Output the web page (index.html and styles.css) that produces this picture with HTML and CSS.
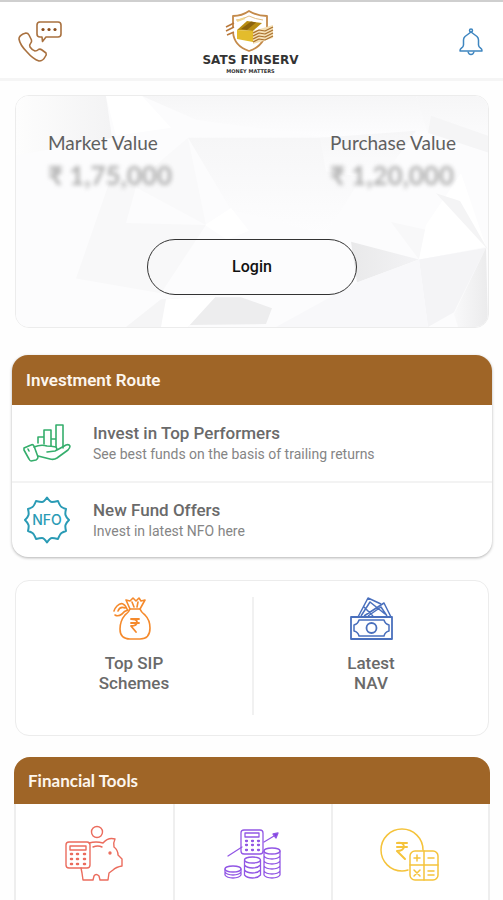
FILE: index.html
```html
<!DOCTYPE html>
<html lang="en">
<head>
    <meta charset="UTF-8">
    <meta name="viewport" content="width=device-width, initial-scale=1">
    <title>Sats Finserv</title>
    <link rel="stylesheet" href="styles.css">
</head>
<body>
    <header class="topbar">
        <button class="icon-btn" aria-label="Contact us">
            <svg width="44" height="42" viewBox="0 0 44 42" fill="none" stroke="#a9713f" stroke-width="1.6" stroke-linejoin="round" stroke-linecap="round">
                <path d="M21 1H40Q43 1 43 4V13Q43 16 40 16H28L24.500 20.500L24 16H22Q19 16 19 13V4Q19 1 22 1Z"/>
                <path d="M5 13L8 12Q10 12 11 14L13.500 19Q14 21 12.500 22.500Q11 24 12 26Q14 29 17 30Q19 30 20.500 28.500Q22 27.500 24 29L28 32Q29 34 27 36Q25 40 21 40Q15 38 9 31Q2 24 1 18Q1 15 5 13Z"/>
                <g fill="#8b4d1b" stroke="none"><circle cx="25" cy="8.500" r="1.600"/><circle cx="31" cy="8.500" r="1.600"/><circle cx="37" cy="8.500" r="1.600"/></g>
            </svg>
        </button>
        <a class="brand" href="#">
            <svg width="50" height="42" viewBox="0 0 50 42" fill="none" stroke-linejoin="round" aria-hidden="true">
                <path d="M8 18V6Q17 6 24 1Q32 6 42 6V18" stroke="#c48a4a" stroke-width="1.800"/>
                <path d="M8 22Q9 36 24 41Q34 38 39 29" stroke="#c48a4a" stroke-width="1.800"/>
                <path d="M11 10Q17 10 24 6Q30 9 38 10" stroke="#e2bd83" stroke-width="1"/>
                <path d="M1 17L9 13M1 21L9 17M2 25L9 22" stroke="#b9783a" stroke-width="1.500"/>
                <path d="M12 20L22 11L37 13L28 21Z" fill="#b98d12"/>
                <path d="M12 20L28 21V32L12 29Z" fill="#e3bc2c"/>
                <path d="M16 19L26 11.500L31 12.500L22 20Z" fill="#8c640d"/>
                <path d="M28 21L48 15V28L28 34Z" fill="#f4dfb5"/>
                <path d="M28 23L34 20L40 21L48 17M28 26L34 23L40 24L48 20M28 29L34 26L40 27L48 23M28 32L34 29L40 30L48 26" stroke="#a9702d" stroke-width="1.200"/>
                <path d="M12 11L20 8" stroke="#f0d690" stroke-width="2"/>
            </svg>
            <span class="brand-name">SATS FINSERV</span>
            <span class="brand-tag">MONEY MATTERS</span>
        </a>
        <button class="icon-btn" aria-label="Notifications">
            <svg width="24" height="28" viewBox="0 0 24 28" fill="none" stroke="#3f86c0" stroke-width="1.500" stroke-linejoin="round">
                <circle cx="12" cy="2.500" r="1.500"/>
                <path d="M12 4L6 8.500Q4.500 10 4.500 12V17Q4.500 19 2 20.500Q1 21 1 23H23Q23 21 22 20.500Q19.500 19 19.500 17V12Q19.500 10 18 8.500Z"/>
                <path d="M9 23.500Q9.500 26.500 12 26.500Q14.500 26.500 15 23.500"/>
            </svg>
        </button>
    </header>

    <main>
        <section class="card portfolio">
            <!-- faceted backdrop -->
            <svg class="facets" viewBox="0 0 472 233" preserveAspectRatio="none" aria-hidden="true">
                <defs>
                    <linearGradient id="fade" x1="0" y1="0" x2="1" y2="0">
                        <stop offset="0" stop-color="#e9e9ea"/><stop offset="1" stop-color="#f3f3f5"/>
                    </linearGradient>
                    <linearGradient id="soft" x1="0" y1="0" x2="0" y2="1">
                        <stop offset="0" stop-color="#f6f6f7"/><stop offset="1" stop-color="#fdfdfe"/>
                    </linearGradient>
                    <linearGradient id="left" x1="0" y1="0" x2="1" y2="0">
                        <stop offset="0" stop-color="#fdfdfd"/><stop offset="1" stop-color="#f3f3f4"/>
                    </linearGradient>
                    <linearGradient id="side" x1="0" y1="0" x2="1" y2="0">
                        <stop offset="0" stop-color="#f9f9fa"/><stop offset="1" stop-color="#ebebec"/>
                    </linearGradient>
                </defs>
                <path fill="#fcfcfd" d="M0 0H472V233H0Z"/>
                <path fill="url(#left)" d="M0 0H90L96 42L0 60Z"/>
                <path fill="url(#soft)" d="M126 0H400L415 40L310 42L180 24Z"/>
                <path fill="#fff" d="M90 0H126L155 32L100 40Z"/>
                <path fill="url(#soft)" d="M172 42H310L350 75L310 140L215 115Z"/>
                <path fill="#f9f9fa" d="M172 42L190 130L116 90Z"/>
                <path fill="#f8f8f9" d="M94 85L120 92L110 128L190 130L145 199L60 184Z"/>
                <path fill="url(#soft)" d="M304 42L400 35L365 85L310 76Z"/>
                <path fill="url(#soft)" d="M400 0H472V55L412 38Z"/>
                <path fill="#f5f5f6" d="M415 20L472 40V57L412 37Z"/>
                <path fill="#fff" d="M189 130L215 113L233 136L211 145Z"/>
                <path fill="#f8f8f9" d="M375 127L410 135L403 165Z"/>
                <path fill="#fff" d="M410 130L445 78L470 152L403 165Z"/>
                <path fill="#f4f4f5" d="M420 98L444 106L472 155Z"/>
                <path fill="url(#fade)" d="M335 147L403 165L341 188Z"/>
                <path fill="#f4f4f6" d="M403 165L470 153L438 218L412 233Z"/>
                <path fill="#f8f8fa" d="M341 188L403 165L412 233H260Z"/>
                <path fill="url(#side)" d="M470 153L438 220L442 233H472Z"/>
                <path fill="#f5f5f6" d="M145 205L200 202L172 233H110Z"/>
                <path fill="#ededee" d="M198 203H225L256 214L250 230L172 231Z"/>
                <path fill="#fff" d="M150 205L200 202L172 233H145Z"/>
            </svg>
            <dl class="values">
                <div>
                    <dt>Market Value</dt>
                    <dd>₹ 1,75,000</dd>
                </div>
                <div>
                    <dt>Purchase Value</dt>
                    <dd>₹ 1,20,000</dd>
                </div>
            </dl>
            <button class="login">Login</button>
        </section>

        <section class="panel routes">
            <h2 class="panel-title">Investment Route</h2>
            <a class="route" href="#">
                <svg width="48" height="38" viewBox="0 0 48 38" fill="none" stroke="#35ae6c" stroke-width="1.600" stroke-linejoin="round" stroke-linecap="round">
                    <path d="M15 19V13H21V20M21 19V6H28V22M28 15H33V23M33 23V1H40V24"/>
                    <path d="M1 24L8 21Q10 20 11 22L15 33Q15 35 13 36L8 37Q7 37 6 35L1 26Z"/>
                    <path d="M11 23Q18 20 24 22Q28 22 33 23Q35 26 32 27L24 28M34 26L43 21Q46 20 47 22Q47 24 45 26L34 34Q31 36 27 35L15 32"/>
                    <path d="M5 25L6 27"/>
                </svg>
                <span class="route-text">
                    <strong>Invest in Top Performers</strong>
                    <span>See best funds on the basis of trailing returns</span>
                </span>
            </a>
            <a class="route" href="#">
                <svg width="48" height="48" viewBox="0 0 48 48" fill="none" stroke="#2a9bb5" stroke-width="2" stroke-linejoin="round">
                    <path d="M24 1.500Q27 6 29 6Q31 6 35 5Q37 10 38.500 11Q40 12 43 13Q42 17 42.500 19Q43 21 46 24Q43 27 42.500 29Q42 31 43 35Q40 36 38.500 37Q37 38 35 43Q31 42 29 42Q27 42 24 46.500Q21 42 19 42Q17 42 13 43Q11 38 9.500 37Q8 36 5 35Q6 31 5.500 29Q5 27 2 24Q5 21 5.500 19Q6 17 5 13Q8 12 9.500 11Q11 10 13 5Q17 6 19 6Q21 6 24 1.500Z"/>
                    <text class="nfo" x="24" y="29" text-anchor="middle">NFO</text>
                </svg>
                <span class="route-text">
                    <strong>New Fund Offers</strong>
                    <span>Invest in latest NFO here</span>
                </span>
            </a>
        </section>

        <nav class="card shortcuts">
            <a href="#">
                <svg width="44" height="44" viewBox="0 0 44 44" fill="none" stroke="#f58a2c" stroke-width="1.600" stroke-linejoin="round" stroke-linecap="round">
                    <path d="M18 12L14 3L18 4L21 1L24 4L27 1L29 4L33 3L28 12M20 5L22 10M26 5L25 10"/>
                    <path d="M18 12H28Q29 15 33 18Q38 23 38 31Q38 42 28 42H18Q8 42 8 32Q8 24 13 18Q17 15 18 12Z"/>
                    <path d="M16 13Q12 14 10 17Q6 20 3 18M15 12Q11 3 5 9Q3 11 2 14M13 11Q8 9 6 14"/>
                    <path stroke-width="1.800" d="M19 22H27M19 26H27M19 22Q25 22 25 25Q25 29 19 29L24 35"/>
                </svg>
                <span>Top SIP<br>Schemes</span>
            </a>
            <a href="#">
                <svg width="44" height="44" viewBox="0 0 44 44" fill="none" stroke="#4a70bd" stroke-width="1.800" stroke-linejoin="round">
                    <path d="M2 20H43V42H2Z"/>
                    <path stroke-width="1.500" d="M10 23H35Q36 27 40 28V34Q36 35 35 39H10Q9 35 5 34V28Q9 27 10 23Z"/>
                    <circle cx="22.500" cy="31" r="5"/>
                    <path stroke-width="1.500" d="M9 20L19 1L32 7M12 19L21 5L36 17M15 19L35 6L42 20M19 19L32 10L38 19M15 10L24 19"/>
                </svg>
                <span>Latest<br>NAV</span>
            </a>
        </nav>

        <section class="panel tools">
            <h2 class="panel-title">Financial Tools</h2>
            <div class="tool-grid">
                <a href="#" aria-label="Savings calculator">
                    <svg width="60" height="60" viewBox="0 0 60 60" fill="none" stroke="#eb6c5d" stroke-width="1.400" stroke-linejoin="round" stroke-linecap="round">
                        <circle cx="32" cy="8" r="5.500"/>
                        <path d="M4 18H22Q25 18 25 21V41Q25 44 22 44H4Q1 44 1 41V21Q1 18 4 18ZM5 22H21V26H5Z"/>
                        <path stroke-width="2.500" d="M6 30H7M12 30H13M19 30H20M6 35H7M12 35H13M19 35H20M6 40H7M12 40H13M19 40H20"/>
                        <path d="M24 19Q31 17 38 19Q43 13 50 15Q48 19 49 23Q53 26 53 31L57 35V42Q51 43 48 46L44 49L43 56H35L34 52Q31 49 29 52L28 56H18L17 49L16 44M28 23Q33 21 37 23"/>
                        <circle cx="45" cy="29" r="1" fill="#eb6c5d"/>
                    </svg>
                </a>
                <a href="#" aria-label="Growth calculator">
                    <svg width="60" height="60" viewBox="0 0 60 60" fill="none" stroke="#9257e5" stroke-width="1.300" stroke-linejoin="round" stroke-linecap="round">
                        <path d="M5 32L19 23M41 18L51 12"/><path fill="#7a3fe0" d="M50 10L55 9L53 14Z"/>
                        <path d="M21 6H37Q40 6 40 9V27Q40 30 37 30H21Q18 30 18 27V9Q18 6 21 6ZM22 9H36V13H22Z"/>
                        <path stroke-width="2.300" d="M23 17H24M29 17H30M35 17H36M23 21H24M29 21H30M35 21H36M23 26H24M29 26H30M35 26H36"/>
                        <ellipse cx="10" cy="45" rx="8" ry="3"/>
                        <path d="M2 45V51Q4 54 10 54Q16 54 18 51V45M2 48Q4 51 10 51Q16 51 18 48"/>
                        <ellipse cx="29.500" cy="36" rx="8" ry="3"/>
                        <path d="M21.500 36V51Q24 54 29.500 54Q35 54 37.500 51V36M21.500 41Q24 44 29.500 44Q35 44 37.500 41M21.500 46Q24 49 29.500 49Q35 49 37.500 46"/>
                        <ellipse cx="49" cy="27" rx="8" ry="3"/>
                        <path d="M41 27V51Q43 54 49 54Q55 54 57 51V27M41 32Q43 35 49 35Q55 35 57 32M41 37Q43 40 49 40Q55 40 57 37M41 42Q43 45 49 45Q55 45 57 42M41 47Q43 50 49 50Q55 50 57 47"/>
                    </svg>
                </a>
                <a href="#" aria-label="SIP calculator">
                    <svg width="60" height="60" viewBox="0 0 60 60" fill="none" stroke="#f5c33b" stroke-width="1.500" stroke-linejoin="round" stroke-linecap="round">
                        <path d="M28 46Q25 47 22 47A21 21 0 1 1 43 26"/>
                        <path stroke-width="2" d="M17 19H27M17 23H27M17 19Q24 18 24 23Q23 27 17 27L25 35"/>
                        <rect x="30" y="27" width="28" height="29" rx="5"/>
                        <path d="M44 27V56M30 41H58"/>
                        <path d="M34 34H40M37 31V37M48 34H54M34 46L40 52M40 46L34 52M48 47H54M48 51H54"/>
                    </svg>
                </a>
            </div>
        </section>
    </main>
</body>
</html>
```
FILE: styles.css
```css
* {
    box-sizing: border-box;
}
body {
    margin: 0;
    height: 100vh;
    display: flex;
    flex-direction: column;
    overflow: hidden;
    background-color: #fefefe;
    font-family: Roboto, Arial, sans-serif;
    color: #6a6a6a;
}
a {
    color: inherit;
    text-decoration: none;
}
button {
    font: inherit;
    cursor: pointer;
}
svg {
    display: block;
    flex-shrink: 0;
}
.topbar {
    display: flex;
    justify-content: space-between;
    align-items: center;
    padding: 8px 20px 4px 18px;
    border-top: 2px solid #cfcfcf;
    border-bottom: 3px solid #f5f5f5;
    background-color: white;
}
.icon-btn {
    width: 44px;
    padding: 0;
    border: none;
    background: none;
}
.icon-btn:last-child svg {
    margin-left: auto;
}
.brand {
    display: flex;
    flex-direction: column;
    align-items: center;
    font-family: "DejaVu Sans", sans-serif;
    color: #333;
}
.brand-name {
    font-size: 12px;
    font-weight: bold;
    line-height: 16px;
}
.brand-tag {
    font-size: 5px;
    font-weight: bold;
    line-height: 6px;
}
main {
    flex: 1;
    display: flex;
    flex-direction: column;
    min-height: 0;
    padding: 14px 11px 0 12px;
}
.card {
    margin: 0 3px;
    border: 1px solid #ececec;
    border-radius: 14px;
    background-color: white;
}
.portfolio {
    position: relative;
    overflow: hidden;
    padding: 35px 32px 32px;
    font-family: Lato, sans-serif;
}
.facets {
    position: absolute;
    inset: 0;
    width: 100%;
    height: 100%;
}
.values {
    position: relative;
    display: flex;
    justify-content: space-between;
    margin: 0 0 48px;
}
.values dt {
    font-size: 19px;
    line-height: 24px;
    color: #606060;
}
.values dd {
    margin: 4px 0 0;
    font-size: 26px;
    font-weight: bold;
    line-height: 32px;
    color: #b0b0b0;
    filter: blur(2px);
}
.login {
    position: relative;
    display: block;
    width: 210px;
    margin: 0 auto;
    padding: 15px;
    border: 1px solid #333;
    border-radius: 28px;
    background-color: transparent;
    font-family: Roboto, sans-serif;
    font-size: 16px;
    font-weight: 500;
    line-height: 24px;
    color: #111;
}
.panel {
    overflow: hidden;
    border-radius: 16px;
    background-color: white;
}
.panel-title {
    margin: 0;
    padding: 0 14px;
    background-color: #9f6527;
    color: #fdf6ee;
    font-size: 17px;
    font-weight: 600;
    line-height: 50px;
}
.routes {
    flex-shrink: 0;
    margin: 27px 0 23px;
    box-shadow: 0 1px 3px rgba(0,0,0,0.3);
}
.route {
    display: flex;
    align-items: center;
    gap: 22px;
    min-height: 76px;
    padding: 0 11px;
}
.route + .route {
    border-top: 2px solid #f3f3f3;
}
.route-text {
    font-size: 14px;
    line-height: 20px;
    color: #858585;
}
.route-text strong {
    display: block;
    font-size: 17px;
    font-weight: 500;
    line-height: 22px;
    color: #6a6a6a;
}
.nfo {
    font: 500 14px Inter, sans-serif;
    fill: #2a9bb5;
    stroke: none;
}
.shortcuts {
    display: grid;
    grid-template-columns: 1fr 1fr;
    padding: 16px 0 20px;
}
.shortcuts a {
    display: flex;
    flex-direction: column;
    align-items: center;
    gap: 12px;
    min-height: 118px;
    font-size: 17px;
    font-weight: 500;
    line-height: 20px;
    text-align: center;
}
.shortcuts a + a {
    border-left: 2px solid #f1f1f1;
}
.tools {
    flex: 1;
    display: flex;
    flex-direction: column;
    margin: 21px 2px 0;
    border-radius: 16px 16px 0 0;
}
.tools .panel-title {
    font-family: Lato, sans-serif;
    font-weight: bold;
    line-height: 47px;
}
.tool-grid {
    flex: 1;
    display: grid;
    grid-template-columns: repeat(3, 1fr);
    border: solid #eeeeee;
    border-width: 0 2px;
}
.tool-grid a {
    display: flex;
    justify-content: center;
    padding-top: 20px;
}
.tool-grid a + a {
    border-left: 2px solid #efefef;
}
```
